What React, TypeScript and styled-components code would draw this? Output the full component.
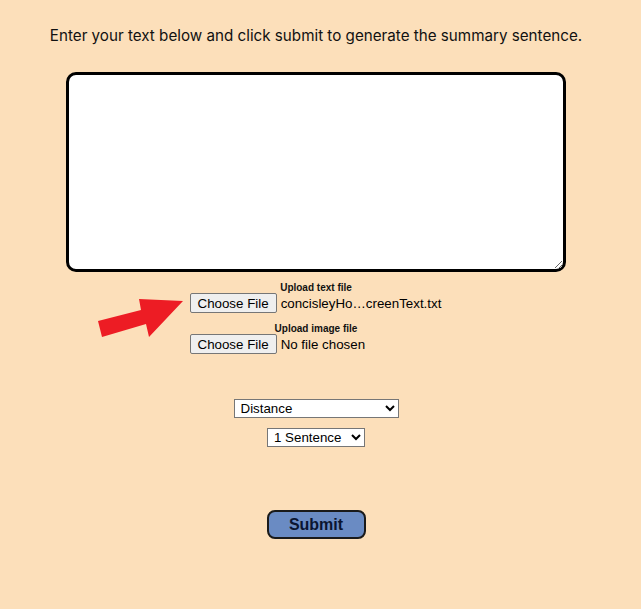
import React, { useState } from 'react'
import styled, { createGlobalStyle } from 'styled-components'

const GlobalStyle = createGlobalStyle`
    html, body {
        margin: 0;
        background: #FCDFBA;
    }
`

const Arrow = () => {
    return (
        <ArrowSvg width="90" height="42" viewBox="0 0 90 42">
            <polygon points="2,22 45,11 43,0 87,2 53,38 50,25 6,38" fill="#ED1C24" />
        </ArrowSvg>
    )
}

const FakeFile = (props: any) => {
    return (
        <UploadBlock>
            <UploadLabel>{props.label}</UploadLabel>
            <FileRow>
                {props.arrow && <Arrow />}
                <FileButton type="button">Choose File</FileButton>
                <FileName>{props.fileName || 'No file chosen'}</FileName>
            </FileRow>
        </UploadBlock>
    )
}

const App = () => {
    const [text, setText] = useState<string>('')
    const [method, setMethod] = useState<string>('distance')
    const [count, setCount] = useState<string>('1')

    return (
        <>
            <GlobalStyle />
            <Page>
                <Intro>Enter your text below and click submit to generate the summary sentence.</Intro>
                <TextBox value={text} onChange={(e: React.ChangeEvent<HTMLTextAreaElement>) => setText(e.target.value)} />
                <Uploads>
                    <FakeFile label="Upload text file" fileName="concisleyHo…creenText.txt" arrow />
                    <FakeFile label="Upload image file" />
                </Uploads>
                <Options>
                    <MethodSelect value={method} onChange={(e: React.ChangeEvent<HTMLSelectElement>) => setMethod(e.target.value)}>
                        <option value="distance">Distance</option>
                        <option value="frequency">Frequency</option>
                        <option value="textrank">TextRank</option>
                    </MethodSelect>
                    <CountSelect value={count} onChange={(e: React.ChangeEvent<HTMLSelectElement>) => setCount(e.target.value)}>
                        <option value="1">1 Sentence</option>
                        <option value="2">2 Sentences</option>
                        <option value="3">3 Sentences</option>
                    </CountSelect>
                </Options>
                <SubmitBtn>Submit</SubmitBtn>
            </Page>
        </>
    )
}

const Page = styled.div`
    min-height: 609px;
    box-sizing: border-box;
    width: 632px;
    padding-top: 26px;
    display: flex;
    flex-direction: column;
    align-items: center;
    background: #FCDFBA;
`

const Intro = styled.p`
    margin: 0;
    font-family: Inter, "Liberation Sans", sans-serif;
    font-size: 15.2px;
    line-height: 19px;
    color: #111;
`

const TextBox = styled.textarea`
    margin-top: 27px;
    width: 500px;
    height: 200px;
    box-sizing: border-box;
    border: 3px solid #000;
    border-radius: 10px;
    background: #fff;
    resize: both;
    &:focus {
        outline: none;
    }
`

const Uploads = styled.div`
    margin-top: 10px;
    display: flex;
    flex-direction: column;
    align-items: center;
    gap: 10px;
`

const UploadBlock = styled.div`
    display: flex;
    flex-direction: column;
    align-items: center;
`

const UploadLabel = styled.div`
    font-family: "Liberation Sans", Arial, sans-serif;
    font-size: 10px;
    font-weight: bold;
    line-height: 11px;
    color: #111;
`

const FileRow = styled.div`
    position: relative;
    width: 253px;
    display: flex;
    align-items: center;
`

const ArrowSvg = styled.svg`
    position: absolute;
    left: -94px;
    top: 6px;
`

const FileButton = styled.button`
    flex-shrink: 0;
    height: 20px;
    padding: 0 7px;
    white-space: nowrap;
    font-family: "Liberation Sans", Arial, sans-serif;
    font-size: 13.33px;
    color: #000;
    background: #EFEFEF;
    border: 1px solid #767676;
    border-radius: 2px;
`

const FileName = styled.span`
    margin-left: 4px;
    font-family: "Liberation Sans", Arial, sans-serif;
    font-size: 13.33px;
    color: #000;
    white-space: nowrap;
`

const Options = styled.div`
    margin-top: 45px;
    display: flex;
    flex-direction: column;
    align-items: center;
    gap: 10px;
`

const MethodSelect = styled.select`
    width: 165px;
    height: 19px;
    padding: 0 2px;
    font-family: "Liberation Sans", Arial, sans-serif;
    font-size: 13.33px;
    color: #000;
    background: #fff;
    border: 1px solid #767676;
`

const CountSelect = styled(MethodSelect)`
    width: 98px;
`

const SubmitBtn = styled.button`
    margin-top: 63px;
    width: 99px;
    height: 29px;
    font-family: "Liberation Sans", Arial, sans-serif;
    font-size: 16px;
    font-weight: bold;
    color: #0B1530;
    background: #6A8BC3;
    border: 2px solid #1A1A1A;
    border-radius: 8px;
    cursor: pointer;
`

export default App
